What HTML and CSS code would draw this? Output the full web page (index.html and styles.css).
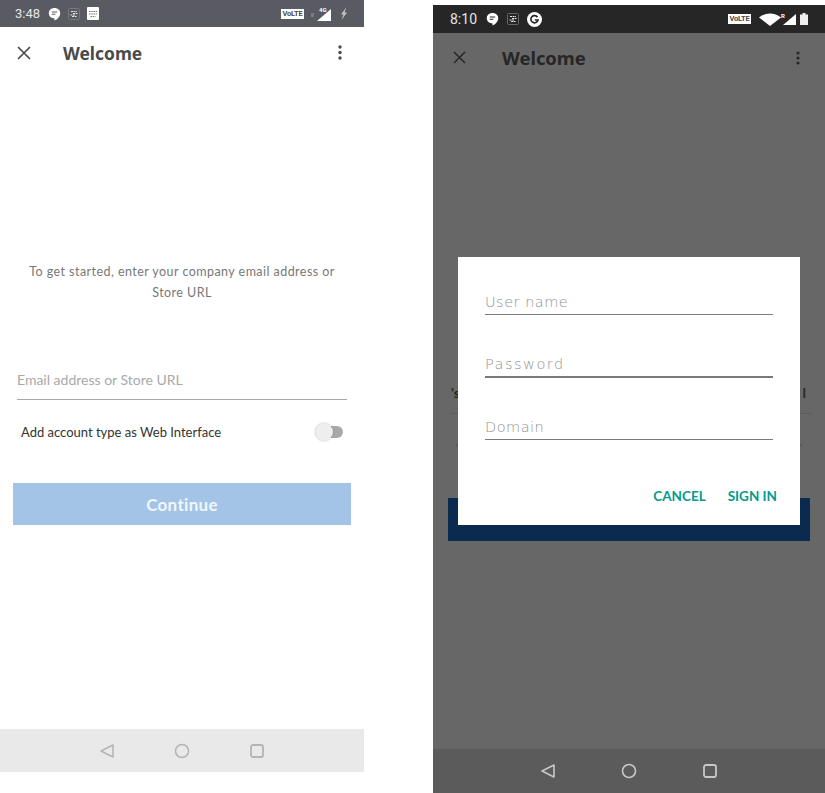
FILE: index.html
```html
<!DOCTYPE html>
<html lang="en">
<head>
  <meta charset="UTF-8" />
  <meta name="viewport" content="width=device-width, initial-scale=1.0"/>
  <title>Welcome</title>
  <link rel="stylesheet" href="styles.css">
</head>
<body>
  <div class="phone phone-light">
    <div class="statusbar">
      <span class="time">3:48</span>
      <svg class="ic" width="13" height="14" viewBox="0 0 13 14"><path d="M6.500 1C3.200 1 .8 3.200.8 6.200c0 3 2.400 5.200 5.700 5.200v2c2.600-1 5.700-3.700 5.700-7.200C12.200 3.200 9.800 1 6.500 1z" fill="#fff"/><path d="M3.800 5h5.400M3.800 7.300h3.600" stroke="#5a5a62" stroke-width="1.100"/></svg>
      <svg class="ic ic-pic" width="12" height="12" viewBox="0 0 12 12"><rect x=".5" y=".5" width="11" height="11" rx="1" fill="none" stroke="#77777d"/><path d="M3 3.500h6M5 5.500h4.500M2.500 7h5M4 8.500h5" stroke="#e6e6e6" stroke-width="1.200" stroke-dasharray="2 .6"/></svg>
      <svg class="ic ic-pic" width="12" height="13" viewBox="0 0 12 13"><rect width="12" height="13" rx="1" fill="#fff"/><path d="M2 4.500h8M2 7h8M3.500 9.500h5" stroke="#77777d" stroke-width="1.100" stroke-dasharray="1.500 .7"/></svg>
      <span class="status-right">
        <span class="volte">VoLTE</span>
        <svg class="signal" width="24" height="16" viewBox="0 0 24 16"><path d="M22 3v12H8z" fill="#fff"/><path d="M2 8h3M2 10h3" stroke="#9a9aa0"/><text x="10" y="6" class="net">4G</text></svg>
        <svg class="bolt" width="8" height="13" viewBox="0 0 8 13"><path d="M6.500 0 1 7.500h2.500L1.500 13 7 5.500H4.500z" fill="#c4c4c8"/></svg>
      </span>
    </div>
    <div class="appbar">
      <svg class="close" width="14" height="14" viewBox="0 0 14 14"><path d="M1 1l12 12M13 1 1 13" stroke="#4a4a4a" stroke-width="1.700"/></svg>
      <span class="title">Welcome</span>
      <svg class="more" width="4" height="15" viewBox="0 0 4 15"><circle cx="2" cy="2" r="1.700"/><circle cx="2" cy="7.500" r="1.700"/><circle cx="2" cy="13" r="1.700"/></svg>
    </div>
    <div class="content">
      <p class="intro">To get started, enter your company email address or<br>Store URL</p>
      <div class="email">Email address or Store URL</div>
      <div class="account-row">
        <span>Add account type as Web Interface</span>
        <span class="toggle"><span class="knob"></span></span>
      </div>
      <div class="continue">Continue</div>
    </div>
    <div class="navbar">
      <svg width="16" height="16" viewBox="0 0 16 16"><path d="M14 2v12L2 8z" fill="none" stroke="#b4b4b4" stroke-width="1.500" stroke-linejoin="round"/></svg>
      <svg width="16" height="16" viewBox="0 0 16 16"><circle cx="8" cy="8" r="6.500" fill="none" stroke="#b4b4b4" stroke-width="1.500"/></svg>
      <svg width="16" height="16" viewBox="0 0 16 16"><rect x="2" y="2" width="12" height="12" rx="2" fill="none" stroke="#b4b4b4" stroke-width="1.800"/></svg>
    </div>
  </div>

  <div class="phone phone-dim">
    <div class="statusbar">
      <span class="time">8:10</span>
      <svg class="ic" width="13" height="14" viewBox="0 0 13 14"><path d="M6.500 1C3.200 1 .8 3.200.8 6.200c0 3 2.400 5.200 5.700 5.200v2c2.600-1 5.700-3.700 5.700-7.200C12.200 3.200 9.800 1 6.500 1z" fill="#fff"/><path d="M3.800 5h5.400M3.800 7.300h3.600" stroke="#262626" stroke-width="1.100"/></svg>
      <svg class="ic ic-pic" width="12" height="12" viewBox="0 0 12 12"><rect x=".5" y=".5" width="11" height="11" rx="1" fill="none" stroke="#666"/><path d="M3 3.500h6M5 5.500h4.500M2.500 7h5M4 8.500h5" stroke="#e6e6e6" stroke-width="1.200" stroke-dasharray="2 .6"/></svg>
      <svg class="ic ic-pic" width="15" height="15" viewBox="0 0 15 15"><circle cx="7.500" cy="7.500" r="7.500" fill="#fff"/><path d="M10.500 5.200A3.600 3.600 0 1 0 11 8H7.800" fill="none" stroke="#262626" stroke-width="1.700"/></svg>
      <span class="status-right">
        <span class="volte">VoLTE</span>
        <svg class="wifi" width="24" height="13" viewBox="0 0 24 13"><path d="M1 4.500C7.500-1 16.500-1 23 4.500L12 13z" fill="#fff"/></svg>
        <svg class="signal" width="17" height="13" viewBox="0 0 17 13"><path d="M16 1v11H3z" fill="#fff"/><text x="1" y="5" class="net">R</text></svg>
        <svg class="battery" width="8" height="12" viewBox="0 0 8 12"><path d="M2.500 0h3v1.500H8V12H0V1.500h2.500z" fill="#eee"/></svg>
      </span>
    </div>
    <div class="screen">
      <div class="appbar">
        <svg class="close" width="13" height="13" viewBox="0 0 13 13"><path d="M1 1l11 11M12 1 1 12" stroke="#262626" stroke-width="1.500"/></svg>
        <span class="title">Welcome</span>
        <svg class="more" width="4" height="14" viewBox="0 0 4 14"><circle cx="2" cy="2" r="1.600"/><circle cx="2" cy="7" r="1.600"/><circle cx="2" cy="12" r="1.600"/></svg>
      </div>
      <div class="behind-text"><span>'s</span><span>l</span></div>
      <div class="behind-marks"><span></span><span></span></div>
      <div class="behind-button"></div>
      <div class="navbar">
        <svg width="16" height="16" viewBox="0 0 16 16"><path d="M14 2v12L2 8z" fill="none" stroke="#c8c8c8" stroke-width="1.600" stroke-linejoin="round"/></svg>
        <svg width="16" height="16" viewBox="0 0 16 16"><circle cx="8" cy="8" r="6.500" fill="none" stroke="#c8c8c8" stroke-width="1.600"/></svg>
        <svg width="16" height="16" viewBox="0 0 16 16"><rect x="2" y="2" width="12" height="12" rx="2" fill="none" stroke="#c8c8c8" stroke-width="1.800"/></svg>
      </div>
    </div>
    <div class="dialog">
      <div class="dialog-field">User name</div>
      <div class="dialog-field field-password">Password</div>
      <div class="dialog-field">Domain</div>
      <div class="dialog-actions">
        <span>CANCEL</span>
        <span>SIGN IN</span>
      </div>
    </div>
  </div>
</body>
</html>
```

FILE: styles.css
```css
* {
  box-sizing: border-box;
}
html, body {
  margin: 0;
  height: 793px;
  overflow: hidden;
  background: #fff;
}
body {
  display: flex;
  gap: 69px;
  font-family: Lato, "Open Sans", sans-serif;
}
.phone {
  display: flex;
  flex-direction: column;
  height: 793px;
}
.phone-light {
  width: 364px;
}
.phone-dim {
  position: relative;
  width: 392px;
  padding-top: 5px;
}

/* status bar */
.statusbar {
  display: flex;
  align-items: center;
  color: #e4e4e6;
  font-family: Roboto, sans-serif;
}
.phone-light .statusbar {
  height: 27px;
  padding: 0 16px 0 15px;
  background: #5a5a62;
}
.phone-dim .statusbar {
  height: 28px;
  padding: 0 17px 0 17px;
  background: #262626;
}
.ic {
  flex: none;
}
.phone-light .ic-pic {
  margin-left: 7px;
}
.phone-dim .ic-pic {
  margin-left: 8px;
}
.phone-light .time {
  width: 33px;
  font-size: 13px;
}
.phone-dim .time {
  width: 36px;
  font-size: 14px;
}
.status-right {
  display: flex;
  align-items: center;
  margin-left: auto;
}
.volte {
  background: #fff;
  color: #4a4a4a;
  font-size: 7.500px;
  font-weight: 700;
  letter-spacing: -.2px;
  line-height: 10px;
  width: 23px;
  text-align: center;
  overflow: hidden;
}
.signal {
  margin-left: 5px;
}
.bolt {
  margin-left: 7px;
}
.wifi {
  margin-left: 7px;
}
.phone-dim .signal {
  margin-left: -2px;
}
.battery {
  margin-left: 3px;
}
.net {
  font-family: Roboto, sans-serif;
  font-size: 6px;
  font-weight: 700;
  fill: #fff;
}

/* app bar */
.appbar {
  display: flex;
  align-items: center;
}
.phone-light .appbar {
  height: 51px;
  padding: 0 22px 0 17px;
}
.phone-dim .appbar {
  height: 49px;
  padding: 0 25px 0 20px;
}
.title {
  font-family: "Noto Sans", sans-serif;
  font-weight: 700;
  font-size: 17.400px;
  color: #4a4a4a;
}
.phone-light .title {
  margin-left: 32px;
}
.phone-dim .title {
  margin-left: 36px;
  font-size: 18.400px;
  color: #262626;
}
.more {
  margin-left: auto;
}
.phone-light .more {
  fill: #4a4a4a;
}
.phone-dim .more {
  fill: #262626;
}

/* left screen */
.content {
  flex: 1;
  padding-top: 183px;
}
.intro {
  margin: 0;
  text-align: center;
  font-size: 12.500px;
  line-height: 21px;
  letter-spacing: .45px;
  color: #777;
}
.email {
  margin: 66px 17px 0;
  height: 31px;
  padding-top: 0;
  border-bottom: 1px solid #a8a8a8;
  font-size: 14px;
  line-height: 22px;
  color: #a9a9a9;
}
.account-row {
  display: flex;
  align-items: center;
  justify-content: space-between;
  margin-top: 22px;
  height: 20px;
  padding: 0 21px 0 21px;
  font-size: 13px;
  color: #333;
}
.toggle {
  position: relative;
  display: block;
  width: 28px;
  height: 12px;
  border-radius: 6px;
  background: #a9a9a9;
}
.knob {
  position: absolute;
  left: 0;
  top: -3px;
  width: 18px;
  height: 18px;
  border-radius: 50%;
  background: #eee;
  box-shadow: 0 0 2px rgba(0, 0, 0, .25);
}
.continue {
  margin: 41px 13px 0;
  height: 42px;
  line-height: 43px;
  text-align: center;
  background: #a3c4e6;
  color: #f1f6fb;
  font-size: 17px;
  font-weight: 700;
  letter-spacing: .3px;
}

/* nav bar */
.navbar {
  display: flex;
  align-items: center;
  justify-content: center;
}
.phone-light .navbar {
  height: 43px;
  gap: 59px;
  margin-bottom: 21px;
  background: #e9e9e9;
}
.phone-dim .navbar {
  height: 44px;
  gap: 65px;
  background: #5b5b5b;
}

/* right screen, dimmed */
.screen {
  flex: 1;
  display: flex;
  flex-direction: column;
  background: #676767;
}
.behind-text {
  display: flex;
  justify-content: space-between;
  margin: 298px 14px 0 17px;
  height: 34px;
  padding: 1px 5px 0 1px;
  border-bottom: 1px solid #5c5c5c;
  font-size: 14px;
  font-weight: 700;
  line-height: 24px;
  color: #262626;
}
.behind-marks {
  display: flex;
  justify-content: space-between;
  margin-top: 30px;
  padding: 0 23px;
}
.behind-marks span {
  width: 3px;
  height: 2px;
  background: #585858;
}
.behind-button {
  margin: 52px 15px 0;
  height: 43px;
  background: #0a2a4f;
}
.screen .navbar {
  margin-top: auto;
}

/* dialog lies over the dimmed screen */
.dialog {
  position: absolute;
  left: 25px;
  top: 257px;
  width: 342px;
  height: 268px;
  padding: 27px 27px 0;
  background: #fff;
}
.dialog-field {
  height: 31px;
  margin-bottom: 31.500px;
  border-bottom: 1.500px solid #7a7a7a;
  font-family: "DejaVu Sans", sans-serif;
  font-weight: 200;
  font-size: 14.500px;
  line-height: 36px;
  letter-spacing: .5px;
  color: #929292;
}
.field-password {
  line-height: 35px;
  letter-spacing: 1.500px;
  border-bottom-width: 2px;
}
.dialog-actions {
  display: flex;
  justify-content: flex-end;
  gap: 22px;
  margin-top: 48px;
  margin-right: -4px;
  font-size: 13.500px;
  font-weight: 700;
  color: #05998a;
}
```
